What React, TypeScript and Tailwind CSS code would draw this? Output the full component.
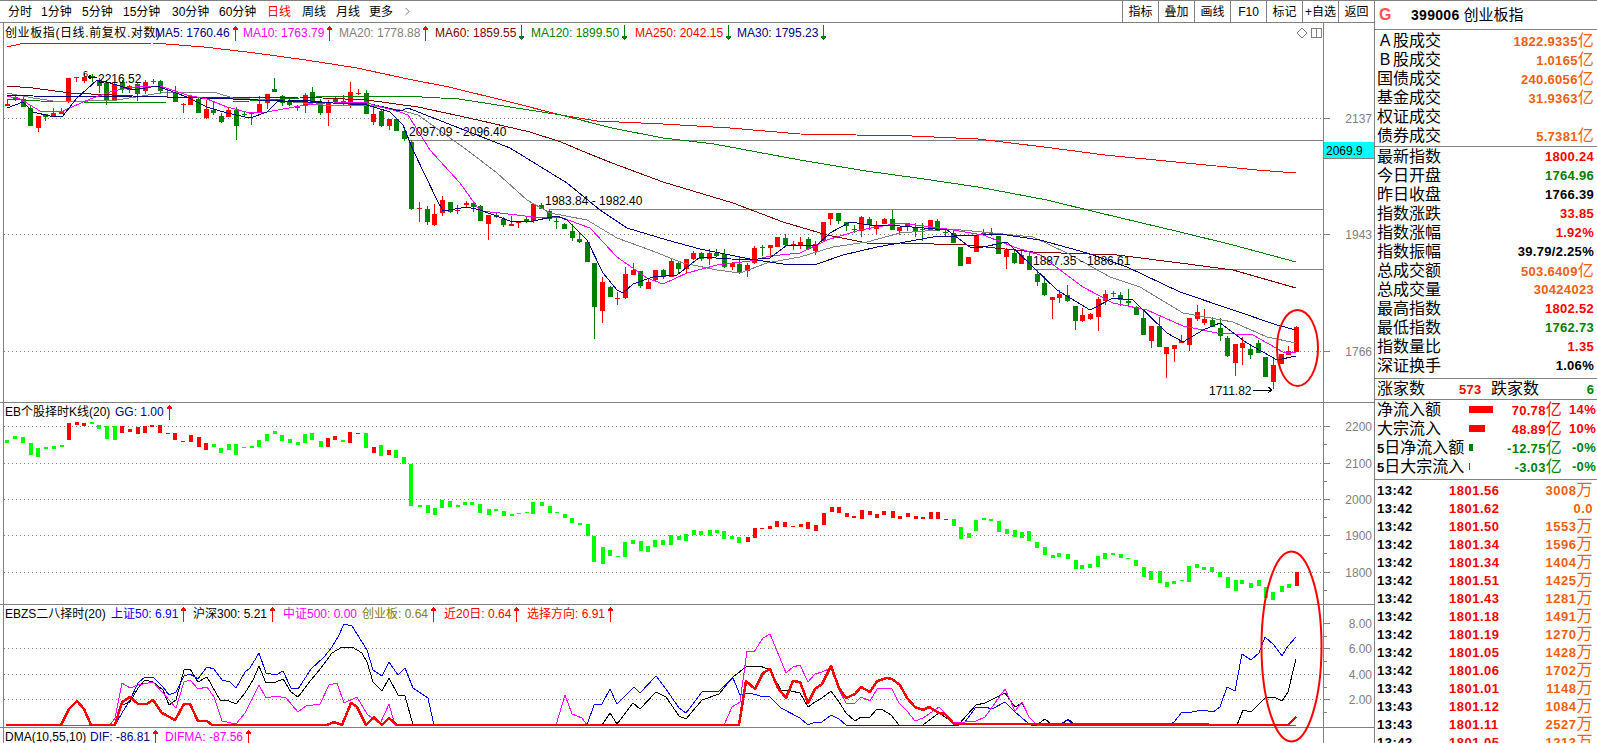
import { ChevronRight } from 'lucide-react';

type Candle = [number, number, number, number, number, 'r' | 'g'];
type Bar = [number, number, number, 'r' | 'g'];

const RED = '#ff0000';
const DKGREEN = '#008000';
const GRAY = '#808080';
const NAVY = '#000080';

// candles read off the chart, grouped by stretch: [x, bodyTop, bodyBottom, wickTop, wickBottom, colour]
const rawA: Candle[] = [
  [22,102,107,88,107,'r'],[44,82,90,75,92,'g'],[70,86,110,80,110,'g'],[91,115,167,105,167,'g'],[115,138,175,138,186,'r'],
  [136,131,140,131,152,'g'],[160,129,138,115,138,'r'],[184,122,132,115,132,'r'],[205,24,94,24,100,'r'],[229,22,25,22,36,'r'],
  [253,20,32,10,38,'r'],[275,18,20,12,36,'g'],[298,30,48,25,70,'g'],[319,38,90,30,105,'g'],[343,42,94,38,94,'r'],
  [367,36,56,30,68,'g'],[388,48,60,44,70,'r'],[412,42,72,38,92,'g'],[436,36,62,30,72,'r'],[458,32,34,26,42,'g'],
  [481,32,62,30,72,'g'],[502,66,68,60,85,'g'],[526,66,97,48,97,'g'],[549,102,104,100,128,'r'],[571,78,104,76,106,'r'],
  [595,86,128,84,128,'g'],[619,118,144,90,146,'r'],[640,120,130,92,134,'g'],[664,138,156,130,160,'g'],[685,120,140,114,142,'r'],
  [709,120,167,110,210,'g'],[733,131,133,125,142,'g'],[754,128,130,126,164,'r'],[778,102,126,78,130,'r'],[802,72,100,72,118,'r'],
  [823,58,65,24,65,'g'],[847,78,98,76,108,'g'],[868,96,106,86,108,'g'],[892,112,115,106,124,'g'],[916,75,105,70,130,'r'],
  [937,66,96,50,100,'g'],[961,105,130,88,135,'g'],[985,95,128,90,168,'r'],[1006,86,96,80,100,'g'],[1030,92,94,76,106,'g'],
  [1051,66,106,36,114,'r'],[1075,68,72,56,76,'r'],[1099,68,132,60,132,'g'],[1120,132,155,108,164,'r'],[1144,122,168,118,172,'g'],
  [1168,147,167,147,180,'r'],[1189,147,183,145,183,'g'],[1213,183,207,180,214,'g'],[1234,215,417,210,420,'g'],
];
const rawB: Candle[] = [
  [58,174,178,156,215,'r'],[82,178,215,168,224,'g'],[103,192,225,162,228,'r'],[127,150,188,138,197,'r'],[151,156,185,156,188,'g'],
  [172,180,184,166,192,'r'],[197,160,166,154,172,'r'],[218,160,170,158,186,'g'],[241,168,212,165,212,'g'],[265,195,222,195,270,'r'],
  [287,196,202,185,204,'g'],[310,206,224,200,230,'g'],[334,222,228,198,228,'r'],[355,214,218,214,234,'r'],[379,208,216,198,218,'g'],
  [400,162,214,160,220,'r'],[424,166,176,160,178,'g'],[448,184,208,178,214,'g'],[469,214,216,205,236,'g'],[493,222,236,220,236,'g'],
  [517,244,263,222,272,'g'],[538,268,276,246,278,'g'],[562,276,335,276,335,'g'],[583,340,470,340,566,'g'],[607,396,482,382,520,'r'],
  [631,411,440,408,440,'g'],[652,444,446,426,464,'r'],[676,372,443,350,446,'r'],[700,360,374,340,374,'r'],[721,364,408,364,414,'g'],
  [745,396,416,384,418,'r'],[766,360,389,360,392,'r'],[790,360,382,356,386,'g'],[814,332,380,326,382,'r'],[835,339,358,336,372,'g'],
  [859,328,358,326,372,'r'],[880,309,326,304,330,'r'],[904,309,328,307,332,'g'],[928,309,326,298,345,'r'],[949,310,318,298,320,'g'],
  [973,312,352,296,354,'g'],[997,339,350,336,360,'r'],[1018,342,370,322,372,'g'],[1042,346,362,340,380,'r'],[1063,294,340,288,342,'r'],
  [1087,292,294,285,318,'g'],[1111,285,295,285,320,'r'],[1132,262,290,262,292,'r'],[1156,264,286,252,290,'g'],[1180,282,285,272,300,'r'],
  [1201,275,285,262,298,'r'],[1225,268,298,262,300,'g'],[1246,282,302,272,316,'r'],[1270,217,272,217,276,'r'],[1291,189,207,189,225,'r'],
  [1315,190,214,190,222,'g'],[1339,216,228,216,242,'g'],[1363,236,238,226,248,'g'],[1384,201,244,198,260,'r'],[1408,208,224,202,240,'g'],
  [1429,227,236,214,252,'r'],[1453,207,222,205,222,'r'],[1477,207,240,180,240,'g'],[1498,232,244,232,256,'r'],
];
const rawC: Candle[] = [
  [22,70,82,70,92,'r'],[46,84,94,70,110,'g'],[67,86,88,70,124,'g'],[91,60,92,60,94,'r'],[112,63,92,57,93,'g'],
  [136,96,98,90,108,'g'],[160,100,129,88,129,'g'],[181,140,197,140,197,'g'],[205,172,191,170,192,'r'],[229,105,155,105,156,'r'],
  [250,100,102,88,108,'g'],[274,98,102,84,108,'r'],[295,108,162,108,162,'g'],[319,150,170,145,207,'r'],[343,158,189,154,192,'g'],
  [364,165,192,154,192,'r'],[388,168,209,155,209,'g'],[412,222,245,210,258,'g'],[433,250,286,228,288,'g'],[457,292,299,292,357,'r'],
  [478,283,294,270,308,'r'],[502,286,303,255,306,'g'],[526,318,362,318,390,'g'],[547,346,362,325,366,'r'],[571,343,357,340,360,'r'],
  [595,296,350,290,393,'r'],[616,282,304,270,314,'r'],[640,280,283,272,292,'r'],[661,286,300,276,318,'g'],[685,304,308,268,322,'g'],
  [709,320,344,318,344,'g'],[730,354,404,328,404,'g'],[754,378,422,378,444,'r'],[778,378,440,352,442,'g'],[799,441,461,441,533,'r'],
  [823,435,446,435,486,'r'],[844,424,428,406,430,'r'],[868,354,434,354,454,'r'],[892,337,356,316,362,'r'],[913,357,370,326,374,'r'],
  [937,360,380,352,382,'g'],[961,385,407,355,424,'g'],[982,414,468,408,470,'g'],[1006,432,488,432,527,'r'],[1027,429,443,412,495,'r'],
  [1051,447,464,435,476,'g'],[1075,430,458,420,460,'g'],[1096,471,530,471,530,'g'],[1120,496,546,478,566,'r'],[1144,462,491,462,492,'r'],
  [1165,454,466,438,466,'r'],[1189,381,456,378,456,'r'],
];

const scaleCandles = (list: Candle[], ox: number, oy: number): Candle[] =>
  list.map(([x, a, b, c, d, k]) => [Math.round(x / 3 + ox), Math.round(a / 3 + oy), Math.round(b / 3 + oy), Math.round(c / 3 + oy), Math.round(d / 3 + oy), k]);

const candles = [...scaleCandles(rawA, 0, 70), ...scaleCandles(rawB, 400, 150), ...scaleCandles(rawC, 900, 200)];

const barsA: Bar[] = [
  [16,135,144,'g'],[34,123,131,'g'],[52,126,144,'g'],[69,144,180,'g'],[86,159,186,'g'],[103,155,162,'g'],[120,153,161,'g'],[138,150,156,'g'],
  [154,83,135,'r'],[172,81,90,'r'],[189,84,94,'r'],[205,81,87,'g'],[222,90,101,'g'],[239,94,132,'g'],[257,94,135,'g'],[274,93,114,'r'],
  [291,102,111,'r'],[308,95,117,'r'],[325,93,114,'r'],[341,90,96,'r'],[359,90,114,'r'],[376,114,117,'r'],[393,114,135,'r'],[410,138,141,'r'],
  [427,120,141,'r'],[445,126,156,'r'],[462,144,165,'r'],[479,147,156,'g'],[496,159,174,'g'],[512,147,165,'g'],[529,147,180,'g'],[547,155,159,'g'],
  [564,153,159,'g'],[581,135,156,'g'],[599,117,138,'g'],[615,108,117,'g'],[632,120,138,'g'],[649,132,144,'g'],[667,141,150,'g'],[684,117,144,'g'],
  [700,114,135,'g'],[718,138,156,'g'],[735,129,156,'r'],[751,123,135,'r'],[769,135,141,'g'],[785,111,144,'r'],[802,114,117,'r'],[820,114,159,'g'],
  [837,156,174,'r'],[854,150,183,'g'],[871,165,180,'r'],[888,165,189,'g'],[906,186,207,'g'],[921,207,333,'g'],[940,330,336,'g'],[958,330,354,'g'],
  [974,339,360,'g'],[991,315,339,'g'],[1008,318,336,'g'],[1025,330,336,'g'],[1042,321,330,'g'],[1058,321,330,'g'],[1076,327,354,'g'],[1095,342,360,'g'],
  [1110,342,348,'g'],[1128,348,363,'g'],[1146,358,363,'g'],[1162,354,357,'g'],[1180,351,354,'g'],[1195,321,357,'g'],[1213,321,333,'g'],[1231,333,354,'g'],
  [1248,352,356,'g'],[1265,357,369,'g'],[1282,369,384,'g'],[1299,384,390,'g'],[1316,387,423,'g'],[1331,423,501,'g'],[1350,456,507,'g'],[1367,465,483,'g'],
  [1385,483,486,'g'],[1401,441,486,'g'],[1418,435,447,'g'],[1435,438,468,'g'],[1452,453,471,'g'],[1468,435,456,'g'],[1486,435,450,'g'],[1503,420,450,'g'],
  [1520,423,435,'g'],[1537,417,438,'g'],[1554,405,420,'g'],
];
const barsB: Bar[] = [
  [2,408,420,'g'],[22,405,423,'g'],[39,405,414,'g'],[56,408,432,'g'],[74,423,432,'g'],[91,426,444,'g'],[110,426,441,'r'],[126,399,429,'r'],
  [144,399,402,'r'],[162,393,402,'r'],[178,378,396,'r'],[197,381,396,'r'],[214,393,396,'r'],[232,387,396,'r'],[250,381,402,'r'],[267,390,408,'r'],
  [285,354,390,'r'],[304,336,351,'r'],[320,336,354,'r'],[338,354,366,'r'],[356,363,369,'r'],[373,345,372,'r'],[391,348,360,'r'],[408,357,369,'r'],
  [425,348,360,'r'],[444,348,369,'r'],[461,363,372,'r'],[479,354,366,'r'],[497,363,372,'r'],[514,366,372,'r'],[532,351,372,'r'],[548,351,372,'r'],
  [567,372,375,'r'],[585,372,393,'g'],[601,396,432,'g'],[620,414,429,'g'],[637,375,408,'g'],[654,369,375,'g'],[672,372,378,'g'],[689,378,411,'g'],
  [707,402,417,'g'],[726,405,426,'g'],[742,411,429,'g'],[759,408,438,'g'],[778,441,459,'g'],[795,456,480,'g'],[813,480,489,'g'],[829,474,486,'g'],
  [848,477,492,'g'],[866,495,522,'g'],[882,510,522,'g'],[900,507,519,'g'],[918,483,516,'g'],[935,474,492,'g'],[953,474,480,'g'],[970,477,489,'g'],
  [988,489,492,'g'],[1006,495,513,'g'],[1023,516,546,'g'],[1041,528,555,'g'],[1060,528,564,'g'],[1076,561,576,'g'],[1094,558,567,'g'],[1111,555,558,'g'],
  [1128,513,561,'g'],[1147,507,519,'g'],[1163,516,525,'g'],[1181,516,531,'g'],[1200,531,546,'g'],[1217,546,579,'g'],[1235,555,588,'g'],[1251,555,567,'g'],
  [1270,564,579,'g'],[1288,555,573,'g'],[1305,576,609,'g'],[1322,591,615,'g'],[1341,573,591,'g'],[1358,567,579,'g'],[1376,531,573,'r'],
];

const ma250 = '7,47 20,44 153,43 204,47 255,53 306,60 357,68 408,79 449,87 510,102 561,115 597,121 663,124 730,128 800,134 912,136 978,139 1044,147 1105,155 1186,163 1257,170 1296,173';
const ma120 = '7,99 40,101 83,102 117,103 167,102 233,102 333,96 403,96 459,99 510,107 561,115 612,128 663,138 714,144 800,160 866,171 917,178 978,187 1047,200 1100,213 1180,232 1233,245 1296,262';
const ma60 = '7,86 33,88 70,93 133,96 200,98 300,97 367,100 418,107 469,118 530,132 561,142 587,153 612,163 663,182 733,203 783,222 827,235 867,243 900,243 967,245 1033,252 1117,255 1180,263 1233,270 1296,288';
const ma30 = '7,95 33,96 67,97 133,96 233,99 333,103 367,103 400,111 408,108 459,128 510,148 567,183 600,210 627,228 667,240 700,249 750,259 783,264 817,264 843,255 877,247 900,243 933,237 1000,234 1040,240 1087,253 1127,267 1180,292 1233,310 1277,325 1296,330';
const ma20 = '7,93 33,98 60,102 117,100 167,92 217,93 233,98 283,101 333,106 367,105 400,110 418,115 467,150 497,173 527,200 550,213 587,220 617,238 650,250 683,263 717,270 740,273 767,263 800,257 833,247 867,242 900,233 950,229 993,233 1033,237 1067,253 1110,277 1140,287 1183,313 1233,322 1267,337 1296,343';
const ma10 = '7,96 20,99 40,111 63,111 90,99 113,91 140,86 160,86 187,95 207,99 227,107 250,113 267,112 300,106 333,102 367,103 400,112 408,115 430,150 460,183 480,211 500,213 533,217 560,217 590,228 617,257 647,278 663,284 687,273 717,265 750,261 770,256 800,253 827,240 860,230 900,223 947,229 983,235 1017,248 1040,255 1083,287 1113,303 1147,310 1183,326 1217,333 1253,335 1283,352 1296,352';
const ma5 = '7,108 23,102 33,112 50,116 62,117 77,98 97,80 110,83 133,90 157,86 187,97 207,107 227,113 250,118 267,112 277,102 300,100 333,103 367,105 390,112 403,125 413,150 437,200 443,211 467,207 480,210 510,221 533,221 557,216 567,220 587,240 603,273 617,290 623,293 633,284 653,277 677,275 700,257 747,260 770,258 787,245 817,245 830,233 850,222 870,225 900,226 947,230 970,247 983,247 1007,242 1033,267 1057,290 1090,310 1113,298 1133,300 1167,333 1183,342 1203,330 1220,323 1247,343 1277,360 1296,356';

// lower indicator: left half then right half of the panel
const toLeft = (s: string) => s.split(' ').map(p => { const [x, y] = p.split(',').map(Number); return `${Math.round(x / 1.96)},${Math.round(y / 3 + 590)}`; }).join(' ');
const toRight = (s: string) => s.split(' ').map(p => { const [x, y] = p.split(',').map(Number); return `${Math.round(x / 2.703 + 800)},${Math.round(y / 3 + 590)}`; }).join(' ');

const blueLine = toLeft('12,405 225,405 240,370 255,330 270,280 285,262 300,262 320,290 332,315 345,305 360,258 372,253 388,268 405,232 420,238 435,270 450,275 463,295 480,245 490,235 508,188 522,250 540,255 555,243 570,295 585,298 610,238 635,200 650,170 665,135 675,103 690,108 710,155 720,180 732,240 748,258 762,215 780,255 793,235 810,295 838,325 850,405 1150,405 1165,345 1180,342 1195,298 1210,342 1242,290 1255,310 1285,258 1305,298 1330,355 1345,368 1375,305 1410,302 1437,265 1450,315 1470,308 1490,318 1510,320 1530,355 1568,385')
  + ' ' + toRight('22,405 40,395 60,397 85,375 105,388 125,405 430,405 445,395 475,350 500,350 520,357 555,335 580,365 615,398 625,405 700,405 722,390 740,402 1000,405 1012,396 1032,365 1060,367 1090,360 1115,365 1135,350 1155,292 1177,302 1196,193 1218,210 1240,190 1258,140 1280,165 1302,198 1320,168 1340,142');
const blackLine = toLeft('12,405 225,405 240,345 255,335 270,295 285,270 300,275 320,300 332,345 345,330 360,240 372,238 388,275 405,262 432,330 448,332 463,342 480,310 495,270 508,228 522,280 540,275 555,268 570,305 585,322 610,270 630,235 650,190 670,172 690,170 710,190 720,215 732,275 748,302 762,265 780,315 793,318 810,405 1180,405 1195,370 1210,402 1240,340 1255,358 1285,305 1305,320 1330,378 1345,388 1375,330 1410,312 1437,262 1465,228 1490,228 1510,240 1530,300 1550,302 1568,310')
  + ' ' + toRight('22,350 40,335 60,325 85,303 105,335 125,370 148,392 165,382 188,382 208,357 225,360 245,375 268,405 332,405 375,368 415,400 430,402 475,345 500,340 555,308 580,350 600,340 620,380 640,405 662,388 680,405 705,405 725,388 742,405 1180,405 1198,360 1218,367 1258,325 1280,322 1302,333 1320,305 1342,207');
const pinkLine = toLeft('12,405 215,405 225,385 240,280 255,295 270,285 300,275 320,310 345,355 360,275 372,270 388,297 405,290 420,320 435,392 463,402 480,370 508,285 522,325 540,318 560,325 585,365 600,348 628,342 645,285 660,278 675,340 700,322 720,372 745,402 762,342 775,405 1090,405 1107,315 1122,372 1140,385 1150,405 1420,405 1435,350 1450,335 1465,182 1478,185 1495,145 1510,132 1540,250 1555,230 1568,226')
  + ' ' + toRight('22,275 40,252 60,247 85,235 105,300 125,340 148,340 165,322 188,333 208,298 235,295 250,298 268,340 290,362 312,392 332,385 375,352 415,400 475,392 500,380 555,298 580,362 600,335 620,380 640,405 1340,405');
const redLine = toLeft('12,405 120,405 135,358 150,332 165,358 178,405 225,405 240,335 255,322 270,342 288,342 300,330 318,370 343,390 360,342 372,342 388,392 405,392 415,405 640,405 655,395 670,405 687,340 700,350 718,405 733,380 748,405 762,385 778,405 1448,405 1463,272 1480,297 1495,250 1510,238 1525,295 1540,325 1555,272 1568,275')
  + ' ' + toRight('22,338 40,298 60,282 85,228 105,295 125,325 148,312 165,292 188,305 208,272 235,265 250,267 270,285 290,325 312,350 332,360 350,352 375,368 392,372 415,403 1320,405 1342,382');

const tabs = [
  { t: '分时', w: 'w-[33px]' }, { t: '1分钟', w: 'w-[41px]' }, { t: '5分钟', w: 'w-[41px]' }, { t: '15分钟', w: 'w-[49px]' },
  { t: '30分钟', w: 'w-[47px]' }, { t: '60分钟', w: 'w-[48px]' }, { t: '日线', w: 'w-[35px] text-[#ff0000]' }, { t: '周线', w: 'w-[34px]' },
  { t: '月线', w: 'w-[33px]' }, { t: '更多', w: 'w-[32px]' },
];
const tools = ['指标', '叠加', '画线', 'F10', '标记', '+自选', '返回'];

type Item = { label: string; c: string; up?: boolean; w: string };
const legendMain: Item[] = [
  { label: 'MA5: 1760.46', c: 'text-[#000080]', up: true, w: 'w-[88px]' },
  { label: 'MA10: 1763.79', c: 'text-[#ff00ff]', up: true, w: 'w-[96px]' },
  { label: 'MA20: 1778.88', c: 'text-[#808080]', up: true, w: 'w-[96px]' },
  { label: 'MA60: 1859.55', c: 'text-[#800000]', up: false, w: 'w-[96px]' },
  { label: 'MA120: 1899.50', c: 'text-[#008000]', up: false, w: 'w-[104px]' },
  { label: 'MA250: 2042.15', c: 'text-[#ff0000]', up: false, w: 'w-[102px]' },
  { label: 'MA30: 1795.23', c: 'text-[#000080]', up: false, w: 'w-[96px]' },
];
const legendBzs: Item[] = [
  { label: '上证50: 6.91', c: 'text-[#0000ff]', up: true, w: 'w-[82px]' },
  { label: '沪深300: 5.21', c: 'text-black', up: true, w: 'w-[90px]' },
  { label: '中证500: 0.00', c: 'text-[#ff00ff]', w: 'w-[79px]' },
  { label: '创业板: 0.64', c: 'text-[#808000]', up: true, w: 'w-[82px]' },
  { label: '近20日: 0.64', c: 'text-[#ff0000]', up: true, w: 'w-[83px]' },
  { label: '选择方向: 6.91', c: 'text-[#ff0000]', up: true, w: 'w-[90px]' },
];

const Arrow = ({ up }: { up: boolean }) => (
  <svg width="7" height="16" viewBox="0 0 7 16" className="ml-[2px] shrink-0" shapeRendering="crispEdges">
    {up ? (
      <g fill={RED}><rect x="3" y="1" width="1" height="15" /><rect x="2" y="2" width="3" height="2" /><rect x="1" y="3" width="5" height="2" /></g>
    ) : (
      <g fill={DKGREEN}><rect x="3" y="0" width="1" height="15" /><rect x="2" y="12" width="3" height="2" /><rect x="1" y="11" width="5" height="2" /></g>
    )}
  </svg>
);

function Legend({ title, titleW, items, tall }: { title: string; titleW: string; items: Item[]; tall?: boolean }) {
  return (
    <div className={`absolute top-0 left-[5px] flex items-center whitespace-nowrap text-[12px] leading-none ${tall ? 'h-[20px]' : 'h-[17px]'}`}>
      <span className={`shrink-0 text-black ${titleW}`}>{title}</span>
      {items.map(it => (
        <span key={it.label} className={`shrink-0 flex items-center ${it.w} ${it.c}`}>
          {it.label}
          {it.up !== undefined && <Arrow up={it.up} />}
        </span>
      ))}
    </div>
  );
}

function Frame({ top, h, ticks, minor, labels }: { top: number; h: number; ticks: number[]; minor?: number[]; labels: [number, string][] }) {
  return (
    <>
      <rect x="3" y={top} width="1" height={h} fill={GRAY} />
      <rect x="1323" y={top} width="1" height={h} fill={GRAY} />
      {ticks.map(y => <rect key={y} x="1324" y={y} width="6" height="1" fill={GRAY} />)}
      {(minor ?? []).map(y => <rect key={y} x="1324" y={y} width="3" height="1" fill={GRAY} />)}
      {labels.map(([y, t]) => (
        <text key={t} x="1372" y={y + 5} textAnchor="end" fontSize="12" fill={GRAY}>{t}</text>
      ))}
    </>
  );
}

const Dots = ({ y }: { y: number }) => (
  <line x1="4" x2="1323" y1={y + 0.5} y2={y + 0.5} stroke={GRAY} strokeDasharray="1 3" />
);

const Poly = ({ points, color, w = 1 }: { points: string; color: string; w?: number }) => (
  <polyline points={points} fill="none" stroke={color} strokeWidth={w} strokeLinejoin="round" />
);

function MainChart() {
  return (
    <svg className="block w-full h-full" viewBox="0 23 1374 379" shapeRendering="crispEdges">
      <Frame top={23} h={379} ticks={[118, 234, 351]} labels={[[118, '2137'], [234, '1943'], [351, '1766']]} />
      <Dots y={118} /><Dots y={234} /><Dots y={351} />
      <rect x="408" y="140" width="915" height="1" fill={GRAY} />
      <rect x="550" y="209" width="773" height="1" fill={GRAY} />
      <rect x="1033" y="269" width="290" height="1" fill={GRAY} />
      {candles.map(([x, a, b, c, d, k]) => {
        const col = k === 'r' ? RED : DKGREEN;
        return (
          <g key={`${x}-${a}`} fill={col}>
            <rect x={x} y={c} width="1" height={Math.max(d - c, 1)} />
            <rect x={x - 2} y={a} width="5" height={Math.max(b - a, 1)} />
          </g>
        );
      })}
      <Poly points={ma250} color={RED} />
      <Poly points={ma120} color={DKGREEN} />
      <Poly points={ma60} color="#800000" />
      <Poly points={ma20} color={GRAY} />
      <Poly points={ma30} color={NAVY} />
      <Poly points={ma10} color="#ff00ff" />
      <Poly points={ma5} color={NAVY} />
      <g fontSize="12" fill="#000">
        <text x="98" y="83">2216.52</text>
        <text x="409" y="136">2097.09 - 2096.40</text>
        <text x="545" y="205">1983.84 - 1982.40</text>
        <text x="1033" y="265">1887.35 - 1886.61</text>
        <text x="1209" y="395">1711.82</text>
        <text x="83" y="77" fontSize="9">6</text>
      </g>
      <g stroke="#000" fill="none">
        <path d="M88 77 H97 M88 77 L91 75 M88 77 L91 79" />
        <path d="M1253 390 H1272 M1272 390 L1268 387 M1272 390 L1268 393" />
      </g>
      {/* price tag on the axis */}
      <rect x="1324" y="142" width="50" height="16" fill="#00ffff" />
      <rect x="1324" y="158" width="50" height="1" fill={GRAY} />
      <text x="1326" y="155" fontSize="12" fill="#000">2069.9</text>
      <g stroke={GRAY} fill="none">
        <path d="M1302 28 L1307 33 L1302 38 L1297 33 Z" />
        <rect x="1311.5" y="28.5" width="10" height="9" />
        <path d="M1316.5 28 V38" />
      </g>
    </svg>
  );
}

function TimingChart() {
  const draw = (list: Bar[], ox: number, sx: number) =>
    list.map(([x, a, b, k]) => (
      <rect
        key={`${ox}-${x}`}
        x={Math.round(x / sx + ox) - 2}
        y={Math.round(a / 3 + 395)}
        width="4"
        height={Math.max(Math.round((b - a) / 3), 1)}
        fill={k === 'r' ? RED : '#00ff00'}
      />
    ));
  return (
    <svg className="block w-full h-full" viewBox="0 403 1374 201" shapeRendering="crispEdges">
      <Frame
        top={403}
        h={201}
        ticks={[426, 463, 499, 535, 572]}
        minor={[444, 481, 517, 553, 590]}
        labels={[[426, '2200'], [463, '2100'], [499, '2000'], [535, '1900'], [572, '1800']]}
      />
      {[426, 463, 499, 535, 572].map(y => <Dots key={y} y={y} />)}
      {draw(barsA, 0, 2.24)}
      {draw(barsB, 700, 2.306)}
    </svg>
  );
}

function BzsChart() {
  return (
    <svg className="block w-full h-full" viewBox="0 605 1374 122" shapeRendering="crispEdges">
      <Frame
        top={605}
        h={122}
        ticks={[623, 648, 674, 699]}
        minor={[636, 661, 687, 712]}
        labels={[[623, '8.00'], [648, '6.00'], [674, '4.00'], [699, '2.00']]}
      />
      {[648, 674, 699].map(y => <Dots key={y} y={y} />)}
      <Poly points={blackLine} color="#000" />
      <Poly points={blueLine} color="#0000ff" />
      <Poly points={pinkLine} color="#ff00ff" />
      <Poly points={redLine} color={RED} w={2.5} />
    </svg>
  );
}

const Yi = () => <span className="text-[16px] font-normal">亿</span>;

const quoteA: [React.ReactNode, string][] = [
  [<><span className="inline-block w-4 text-center">A</span>股成交</>, '1822.9335'],
  [<><span className="inline-block w-4 text-center">B</span>股成交</>, '1.0165'],
  ['国债成交', '240.6056'],
  ['基金成交', '31.9363'],
  ['权证成交', ''],
  ['债券成交', '5.7381'],
];
const ORANGE = 'text-[#ee5f12]';
const quoteB: [string, React.ReactNode, string][] = [
  ['最新指数', '1800.24', 'text-[#ff0000]'],
  ['今日开盘', '1764.96', 'text-[#008000]'],
  ['昨日收盘', '1766.39', 'text-black'],
  ['指数涨跌', '33.85', 'text-[#ff0000]'],
  ['指数涨幅', '1.92%', 'text-[#ff0000]'],
  ['指数振幅', '39.79/2.25%', 'text-black'],
  ['总成交额', <>503.6409<Yi /></>, ORANGE],
  ['总成交量', '30424023', ORANGE],
  ['最高指数', '1802.52', 'text-[#ff0000]'],
  ['最低指数', '1762.73', 'text-[#008000]'],
  ['指数量比', '1.35', 'text-[#ff0000]'],
  ['深证换手', '1.06%', 'text-black'],
];
const flows = [
  { label: <>净流入额</>, bar: 'w-[24px] bg-[#ff0000]', v: '70.78', p: '14%', c: 'text-[#ff0000]' },
  { label: <>大宗流入</>, bar: 'w-[16px] bg-[#ff0000]', v: '48.89', p: '10%', c: 'text-[#ff0000]' },
  { label: <><b className="text-[13px]">5</b>日净流入额</>, bar: 'w-[4px] bg-[#008000]', v: '-12.75', p: '-0%', c: 'text-[#008000]' },
  { label: <><b className="text-[13px]">5</b>日大宗流入</>, bar: 'w-[1px] bg-[#008000]', v: '-3.03', p: '-0%', c: 'text-[#008000]' },
];
const trades: [string, string, string][] = [
  ['13:42', '1801.56', '3008'], ['13:42', '1801.62', '0.0'], ['13:42', '1801.50', '1553'], ['13:42', '1801.34', '1596'],
  ['13:42', '1801.34', '1404'], ['13:42', '1801.51', '1425'], ['13:42', '1801.43', '1281'], ['13:42', '1801.18', '1491'],
  ['13:42', '1801.19', '1270'], ['13:42', '1801.05', '1428'], ['13:42', '1801.06', '1702'], ['13:43', '1801.01', '1148'],
  ['13:43', '1801.12', '1084'], ['13:43', '1801.11', '2527'], ['13:43', '1801.05', '1213'],
];

function SidePanel() {
  return (
    <div className="flex-1 min-w-0 border-l border-t border-[#808080] overflow-hidden">
      <div className="h-[29px] border-b border-[#808080] flex items-center pl-[4px]">
        <span className="w-[32px] text-[16px] font-bold text-[#ff5050]">G</span>
        <span className="text-[14px] font-bold tracking-[0.3px] text-black">399006</span>
        <span className="ml-[4px] text-[15px] text-black">创业板指</span>
      </div>
      <div className="border-b border-[#808080] py-[1px]">
        {quoteA.map(([l, v], i) => (
          <div key={i} className="h-[19px] flex items-center justify-between pl-[2px] pr-[3px] text-[16px] leading-none">
            <span>{l}</span>
            {v && <span className={`text-[13px] font-bold tracking-[0.3px] ${ORANGE}`}>{v}<Yi /></span>}
          </div>
        ))}
      </div>
      <div className="border-b border-[#808080] pb-[3px]">
        {quoteB.map(([l, v, c]) => (
          <div key={l} className="h-[19px] flex items-center justify-between pl-[2px] pr-[3px] text-[16px] leading-none">
            <span>{l}</span>
            <span className={`text-[13px] font-bold tracking-[0.3px] ${c}`}>{v}</span>
          </div>
        ))}
      </div>
      <div className="h-[21px] border-b border-[#808080] flex items-center pl-[2px] pr-[3px] text-[16px] leading-none">
        <span className="w-[82px]">涨家数</span>
        <span className="w-[32px] text-[13px] font-bold tracking-[0.3px] text-[#ff0000]">573</span>
        <span>跌家数</span>
        <span className="ml-auto text-[13px] font-bold text-[#008000]">6</span>
      </div>
      <div className="border-b border-[#808080] pb-[3px]">
        {flows.map((f, i) => (
          <div key={i} className="h-[19px] flex items-center pl-[2px] text-[16px] leading-none">
            <span className="w-[92px] whitespace-nowrap">{f.label}</span>
            <span className={`h-[7px] ${f.bar}`} />
            <span className="flex-1" />
            <span className={`text-[13px] font-bold tracking-[0.3px] ${f.c}`}>{f.v}<Yi /></span>
            <span className={`w-[35px] pr-[1px] text-right text-[13px] font-bold tracking-[0.3px] ${f.c}`}>{f.p}</span>
          </div>
        ))}
      </div>
      <div className="pt-[1px]">
        {trades.map(([t, p, v], i) => (
          <div key={i} className="h-[18px] flex items-center pl-[2px] pr-[4px] text-[13px] font-bold tracking-[0.5px] leading-none">
            <span className="w-[72px] text-black">{t}</span>
            <span className="text-[#ff0000]">{p}</span>
            <span className={`ml-auto ${ORANGE}`}>
              {v}
              {v !== '0.0' && <span className="text-[16px] font-normal">万</span>}
            </span>
          </div>
        ))}
      </div>
    </div>
  );
}

export default function App() {
  return (
    <div className="w-[1597px] h-[743px] flex overflow-hidden bg-white text-black font-['Liberation_Sans','Noto_Sans_CJK_SC',sans-serif]">
      <div className="relative w-[1374px] shrink-0 flex flex-col">
        {/* period tabs + tool buttons */}
        <div className="h-[23px] shrink-0 border-y border-[#808080] flex items-center pl-[8px] text-[12px] leading-none">
          {tabs.map(t => <span key={t.t} className={`whitespace-nowrap ${t.w}`}>{t.t}</span>)}
          <ChevronRight size={13} strokeWidth={1} />
          <div className="ml-auto h-full flex">
            {tools.map(t => (
              <span key={t} className="w-[36px] h-full border-l border-[#808080] flex items-center justify-center">{t}</span>
            ))}
          </div>
        </div>

        <div className="relative h-[380px] shrink-0 border-b border-[#808080]">
          <MainChart />
          <Legend tall title="创业板指(日线.前复权.对数)" titleW="w-[150px] tracking-[0.6px]" items={legendMain} />
        </div>
        <div className="relative h-[202px] shrink-0 border-b border-[#808080]">
          <TimingChart />
          <Legend
            title="EB个股择时K线(20)"
            titleW="w-[110px]"
            items={[{ label: 'GG: 1.00', c: 'text-[#000080]', up: true, w: 'w-[70px]' }]}
          />
        </div>
        <div className="relative h-[123px] shrink-0 border-b border-[#808080]">
          <BzsChart />
          <Legend title="EBZS二八择时(20)" titleW="w-[106px]" items={legendBzs} />
        </div>
        <div className="relative flex-1 min-h-0">
          <svg className="block w-full h-full" viewBox="0 728 1374 15" shapeRendering="crispEdges">
            <rect x="3" y="728" width="1" height="15" fill={GRAY} />
            <rect x="1323" y="728" width="1" height="15" fill={GRAY} />
          </svg>
          <Legend
            title="DMA(10,55,10)"
            titleW="w-[85px]"
            items={[
              { label: 'DIF: -86.81', c: 'text-[#000080]', up: true, w: 'w-[75px]' },
              { label: 'DIFMA: -87.56', c: 'text-[#ff00ff]', up: true, w: 'w-[90px]' },
            ]}
          />
        </div>

        {/* hand-drawn circles over the chart */}
        <svg className="absolute inset-0 w-full h-full pointer-events-none" viewBox="0 0 1374 743" fill="none" stroke={RED} strokeWidth="2">
          <ellipse cx="1297.5" cy="348" rx="20.5" ry="38" />
          <ellipse cx="1291.5" cy="646.5" rx="30" ry="95" />
        </svg>
      </div>
      <SidePanel />
    </div>
  );
}
